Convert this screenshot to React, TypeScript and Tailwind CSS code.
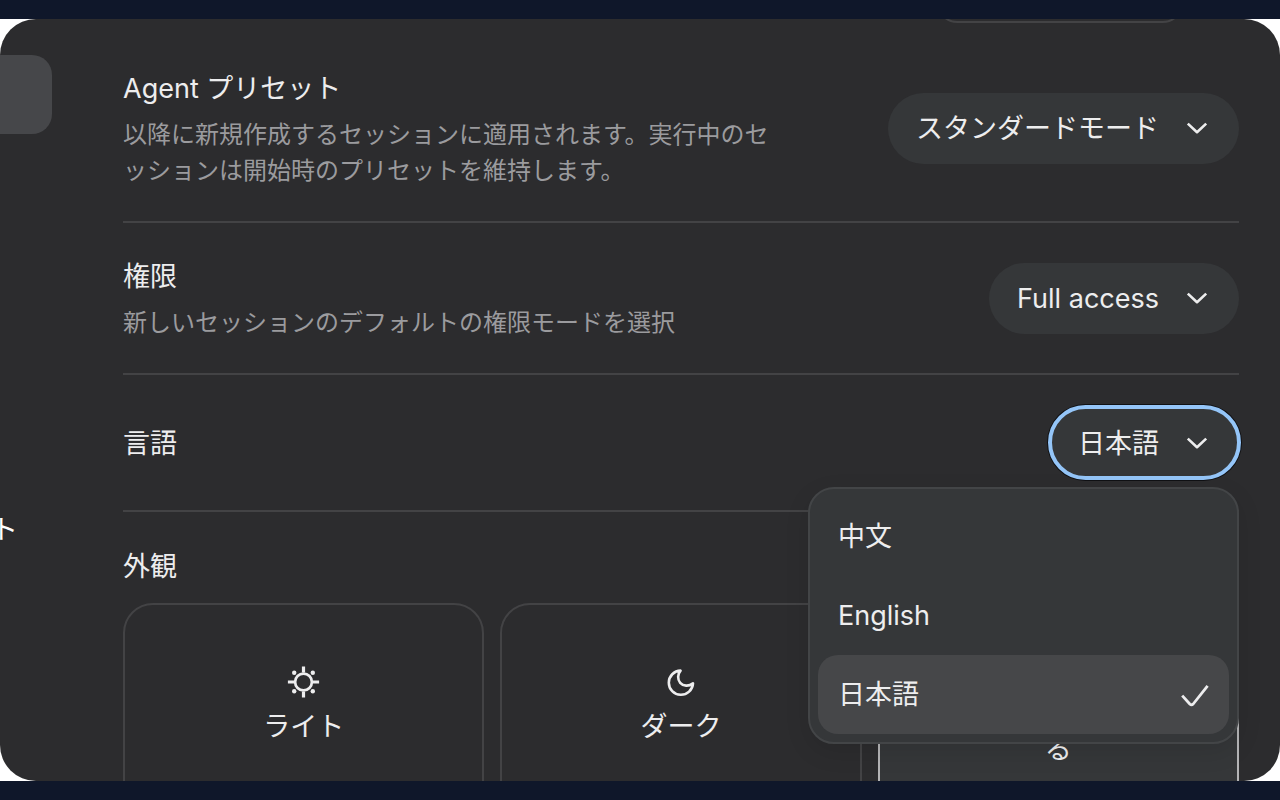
import { useState } from "react";
import type { ReactNode } from "react";

function Chevron() {
  return (
    <svg viewBox="0 0 28 28" className="h-7 w-7 shrink-0" fill="none" aria-hidden="true">
      <path d="M4.8 9.6l9.2 8.6 9.2-8.6" stroke="currentColor" strokeWidth="2.6" strokeLinejoin="round" />
    </svg>
  );
}

function SunIcon() {
  return (
    <svg viewBox="0 0 36 36" className="h-9 w-9" fill="none" stroke="currentColor" aria-hidden="true">
      <circle cx="17.5" cy="18" r="8.4" strokeWidth="2.7" />
      <path d="M17.5 2.4v6.2M17.5 27.4v6.2M1.9 18h6.2M26.9 18h6.2" strokeWidth="3.2" />
      <g fill="currentColor" stroke="none">
        <circle cx="8.2" cy="8.7" r="2.2" />
        <circle cx="26.8" cy="8.7" r="2.2" />
        <circle cx="8.2" cy="27.3" r="2.2" />
        <circle cx="26.8" cy="27.3" r="2.2" />
      </g>
    </svg>
  );
}

function MoonIcon() {
  return (
    <svg viewBox="0 0 36 36" className="h-9 w-9" fill="none" aria-hidden="true">
      <path
        d="M17.6 6.6A12.1 12.1 0 1 0 30 19.4C25.6 22.8 20.2 22.2 17.2 18.8C14.4 15.6 14.4 10.2 17.6 6.6Z"
        stroke="currentColor"
        strokeWidth="2.6"
        strokeLinejoin="round"
      />
    </svg>
  );
}

function MonitorIcon() {
  return (
    <svg viewBox="0 0 36 36" className="h-9 w-9" fill="none" stroke="currentColor" strokeWidth="2.3" aria-hidden="true">
      <rect x="5" y="7" width="26" height="18" rx="3" />
      <path d="M12 30h12" />
    </svg>
  );
}

function CheckIcon() {
  return (
    <svg viewBox="0 0 28 28" className="h-7 w-7" fill="none" aria-hidden="true">
      <path d="M1.2 14.6l7.6 8.4q1.7 1.6 3.4 0L26.6 4.8" stroke="currentColor" strokeWidth="2.8" strokeLinejoin="round" />
    </svg>
  );
}

const pill =
  "flex h-[71px] items-center gap-6 rounded-full bg-[#353739] px-7 text-[27px] leading-10 whitespace-nowrap text-[#ededee]";

function Row({ title, text, children }: { title: string; text?: string; children: ReactNode }) {
  return (
    <div className="flex shrink-0 items-center justify-between border-b-2 border-[#434345] py-8">
      <div className="flex max-w-[650px] flex-col gap-2 pt-0.5">
        <h2 className="text-[27px] leading-10">{title}</h2>
        {text && <p className="text-[24px] leading-9 text-[#9b9b9e]">{text}</p>}
      </div>
      {children}
    </div>
  );
}

const languages = ["中文", "English", "日本語"];

const themes = [
  { label: "ライト", icon: <SunIcon /> },
  { label: "ダーク", icon: <MoonIcon /> },
  { label: "システム設定に合わせる", icon: <MonitorIcon /> },
];

export default function App() {
  const [language, setLanguage] = useState("日本語");
  const [open, setOpen] = useState(true);
  const [theme, setTheme] = useState("システム設定に合わせる");

  return (
    <div
      lang="ja"
      className="flex h-screen flex-col bg-[#0f172a] py-[19px] font-[Inter,'Noto_Sans_CJK_JP',sans-serif] text-[#ededee]"
    >
      <div className="flex min-h-0 flex-1 bg-white">
        <div className="flex min-w-0 flex-1 overflow-hidden rounded-[36px] bg-[#2c2c2e]">
          <nav className="flex w-[52px] shrink-0 flex-col pt-9">
            <button aria-label="一般" className="h-[79px] shrink-0 rounded-r-[20px] bg-[#46474a]" />
            <a href="#agent" className="mt-[375px] flex w-[18px] justify-end overflow-hidden text-[27px] leading-[42px] text-white">
              ト
            </a>
          </nav>

          <main className="flex min-w-0 flex-1 flex-col pr-[41px] pl-[71px]">
            <div className="flex h-1 shrink-0 items-end justify-end overflow-hidden pr-14">
              <div className="h-[70px] w-[246px] shrink-0 rounded-[20px] border-2 border-[#434345]" />
            </div>

            <div className="flex shrink-0 flex-col pt-3">
              <Row
                title="Agent プリセット"
                text="以降に新規作成するセッションに適用されます。実行中のセッションは開始時のプリセットを維持します。"
              >
                <button className={pill}>
                  <span className="pt-0.5">スタンダードモード</span>
                  <Chevron />
                </button>
              </Row>

              <Row title="権限" text="新しいセッションのデフォルトの権限モードを選択">
                <button className={pill}>
                  <span className="pt-0.5">Full access</span>
                  <Chevron />
                </button>
              </Row>

              <Row title="言語">
                <div className="relative">
                  <button
                    aria-haspopup="listbox"
                    aria-expanded={open}
                    onClick={() => setOpen(!open)}
                    className="flex h-[71px] items-center gap-6 rounded-full bg-[#353739] px-7 text-[27px] leading-10 whitespace-nowrap text-[#ededee] shadow-[0_0_0_3px_#101114] outline-4 -outline-offset-2 outline-[#94c5f8]"
                  >
                    <span className="pt-0.5">{language}</span>
                    <Chevron />
                  </button>
                  {open && (
                    <div
                      role="listbox"
                      aria-label="言語"
                      className="absolute top-full right-0 z-10 mt-[9px] flex w-[431px] flex-col rounded-[26px] border-2 border-[#434547] bg-[#353739] p-2 shadow-[0_8px_24px_rgba(0,0,0,0.1)]"
                    >
                      {languages.map((name) => (
                        <button
                          key={name}
                          role="option"
                          aria-selected={name === language}
                          onClick={() => setLanguage(name)}
                          className={
                            name === language
                              ? "flex h-[79px] items-center justify-between rounded-[20px] bg-[#464749] px-5 text-[27px] leading-10"
                              : "flex h-[79px] items-center justify-between rounded-[20px] px-5 text-[27px] leading-10"
                          }
                        >
                          {name}
                          {name === language && <CheckIcon />}
                        </button>
                      ))}
                    </div>
                  )}
                </div>
              </Row>

              <div className="flex flex-col gap-4 pt-[35px]">
                <h2 className="text-[27px] leading-10">外観</h2>
                <div className="grid grid-cols-3 gap-4">
                  {themes.map(({ label, icon }) => (
                    <button
                      key={label}
                      aria-pressed={label === theme}
                      onClick={() => setTheme(label)}
                      className={
                        label === theme
                          ? "flex min-h-[208px] flex-col items-center justify-center gap-1 rounded-[30px] border-2 border-[#b4b4b6] bg-[#353739] px-10 text-[27px] leading-[46px]"
                          : "flex min-h-[208px] flex-col items-center justify-center gap-1 rounded-[30px] border-2 border-[#434345] px-10 text-[27px] leading-[46px]"
                      }
                    >
                      {icon}
                      {label}
                    </button>
                  ))}
                </div>
              </div>
            </div>
          </main>
        </div>
      </div>
    </div>
  );
}
